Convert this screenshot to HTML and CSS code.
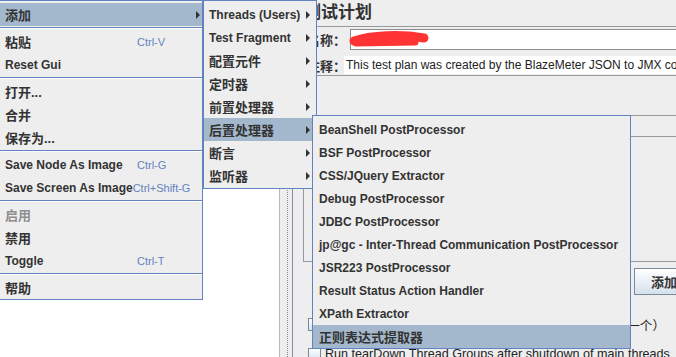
FILE: index.html
```html
<!DOCTYPE html>
<html lang="zh-CN">
<head>
    <meta charset="UTF-8">
    <title>测试计划</title>
    <link rel="stylesheet" href="styles.css">
</head>
<body>

<div class="app">
    <div class="tree"></div>
    <div class="splitter"><div class="grip"></div></div>

    <div class="main">
        <div class="title">测试计划</div>

        <div class="fields">
            <div class="field-row">
                <span class="label">名称：</span>
                <div class="input name-input">
                    <svg class="scribble" width="82" height="18" viewBox="0 0 82 18">
                        <path d="M5 10 C 22 4, 52 3, 75 7" stroke="#ff3333" stroke-width="9" stroke-linecap="round" fill="none"/>
                        <path d="M7 12 L 66 11" stroke="#ff3333" stroke-width="7" stroke-linecap="round" fill="none"/>
                    </svg>
                </div>
            </div>
            <div class="field-row note">
                <span class="label">注释：</span>
                <div class="input note-input">This test plan was created by the BlazeMeter JSON to JMX converter</div>
            </div>
        </div>

        <div class="vars"><div class="vars-head"></div></div>

        <div class="btn-row"><button class="btn">添加</button></div>

        <div class="check-row cn"><span class="box"></span><span>独立运行每个线程组（例如在一个组运行结束后启动下一个）</span></div>
        <div class="check-row last"><span class="box"></span><span>Run tearDown Thread Groups after shutdown of main threads</span></div>
    </div>

    <!-- popup menus -->
    <div class="menu m1">
        <div class="item on"><span class="zh">添加</span><span class="arrow"></span></div>
        <div class="sep"></div>
        <div class="item"><span class="txt zh">粘贴</span><span class="key">Ctrl-V</span></div>
        <div class="item"><span class="txt">Reset Gui</span></div>
        <div class="sep"></div>
        <div class="item"><span class="txt zh">打开...</span></div>
        <div class="item"><span class="txt zh">合并</span></div>
        <div class="item"><span class="txt zh">保存为...</span></div>
        <div class="sep"></div>
        <div class="item"><span class="txt">Save Node As Image</span><span class="key">Ctrl-G</span></div>
        <div class="item"><span class="txt tight">Save Screen As Image</span><span class="key">Ctrl+Shift-G</span></div>
        <div class="sep"></div>
        <div class="item off"><span class="txt zh">启用</span></div>
        <div class="item"><span class="txt zh">禁用</span></div>
        <div class="item"><span class="txt">Toggle</span><span class="key">Ctrl-T</span></div>
        <div class="sep"></div>
        <div class="item"><span class="txt zh">帮助</span></div>
    </div>

    <div class="menu m2">
        <div class="item"><span>Threads (Users)</span><span class="arrow"></span></div>
        <div class="item"><span>Test Fragment</span><span class="arrow"></span></div>
        <div class="item"><span class="zh">配置元件</span><span class="arrow"></span></div>
        <div class="item"><span class="zh">定时器</span><span class="arrow"></span></div>
        <div class="item"><span class="zh">前置处理器</span><span class="arrow"></span></div>
        <div class="item on"><span class="zh">后置处理器</span><span class="arrow"></span></div>
        <div class="item"><span class="zh">断言</span><span class="arrow"></span></div>
        <div class="item"><span class="zh">监听器</span><span class="arrow"></span></div>
    </div>

    <div class="menu m3">
        <div class="item">BeanShell PostProcessor</div>
        <div class="item">BSF PostProcessor</div>
        <div class="item">CSS/JQuery Extractor</div>
        <div class="item">Debug PostProcessor</div>
        <div class="item">JDBC PostProcessor</div>
        <div class="item">jp@gc - Inter-Thread Communication PostProcessor</div>
        <div class="item">JSR223 PostProcessor</div>
        <div class="item">Result Status Action Handler</div>
        <div class="item">XPath Extractor</div>
        <div class="item on"><span class="zh">正则表达式提取器</span></div>
    </div>
</div>

</body>
</html>
```

FILE: styles.css
```css
* {
    box-sizing: border-box;
}

html, body {
    margin: 0;
}

body {
    width: 676px;
    height: 357px;
    overflow: hidden;
    font-family: "Liberation Sans", "Noto Sans CJK SC", sans-serif;
    font-size: 12px;
    color: #333;
    background: #fff;
}

.app {
    position: relative;
    display: flex;
    height: 357px;
}

/* left tree + splitter */
.tree {
    width: 280px;
    flex: none;
    background: #fff;
    border-right: 1px solid #b8b8b8;
}

.splitter {
    width: 13px;
    flex: none;
    padding-left: 7px;
    background: #eee;
    border-right: 1px solid #7f8ea3;
}

.grip {
    height: 100%;
    border-left: 1px dotted #8c8c8c;
}

/* right panel */
.main {
    flex: 1;
    min-width: 0;
    overflow: hidden;
    white-space: nowrap;
    background: #eee;
}

.title {
    height: 27px;
    line-height: 25px;
    padding-left: 11px;
    font-size: 17px;
    font-weight: bold;
    border-bottom: 1px solid #999;
}

.fields {
    padding: 2px 0 1px 14px;
    border-bottom: 1px solid #999;
}

.field-row {
    display: flex;
    align-items: center;
    height: 21px;
}

.label {
    width: 43px;
    flex: none;
    font-size: 13px;
    font-weight: bold;
}

.note {
    margin-top: 6px;
    height: 18px;
}

.note .label {
    width: 37px;
}

.input {
    flex: 1;
    height: 100%;
    background: #fff;
}

.name-input {
    display: flex;
    align-items: center;
    border: 1px solid #8c8c8c;
    border-right: none;
}

.scribble {
    margin-left: -2px;
    margin-top: 1px;
}

.note-input {
    padding-left: 2px;
    line-height: 18px;
    color: #222;
    overflow: hidden;
}

.vars {
    margin: 39px 0 0 10px;
    height: 147px;
    border: 1px solid #999;
    border-right: none;
}

.vars-head {
    height: 21px;
    border-bottom: 1px solid #999;
}

.btn-row {
    margin-top: 6px;
    padding-left: 341px;
}

.btn {
    display: block;
    width: 80px;
    height: 27px;
    padding: 0 0 0 16px;
    text-align: left;
    font-family: "Noto Sans CJK SC", sans-serif;
    font-size: 13px;
    font-weight: bold;
    color: #333;
    border: 1px solid #7a8a99;
    background: linear-gradient(#fff, #d5e1ee);
}

.check-row {
    display: flex;
    align-items: center;
    gap: 4px;
    height: 13px;
    padding-left: 15px;
    color: #222;
}

.check-row.cn {
    margin-top: 23px;
    font-size: 12.6px;
}

.check-row.last {
    margin-top: 17px;
    font-size: 12.6px;
    align-items: flex-start;
    line-height: 12px;
}

.box {
    width: 13px;
    height: 13px;
    flex: none;
    border: 1px solid #7a8a99;
    background: linear-gradient(#fff, #d5e1ee);
}

/* popup menus */
.menu {
    position: absolute;
    top: 0;
    background: #eee;
    border: 1px solid #6382bf;
    padding-top: 2px;
}

.m1 {
    left: -1px;
    width: 204px;
}

.m2 {
    left: 203px;
    width: 114px;
    padding-bottom: 1px;
}

.m3 {
    left: 312px;
    top: 115px;
    width: 319px;
}

.item {
    display: flex;
    align-items: center;
    height: 23px;
    padding: 0 2px 0 5px;
    font-weight: bold;
    white-space: nowrap;
}

.m2 .item {
    padding-right: 6px;
}

.m3 .item {
    padding-left: 6px;
}

.item.on {
    background: #a3b8cc;
}

.item.off {
    color: #8e8e8e;
}

.zh {
    font-size: 13px;
}

.txt {
    min-width: 132px;
}

.txt.tight {
    min-width: 0;
}

.key {
    font-size: 11px;
    font-weight: normal;
    color: #6382bf;
}

.arrow {
    margin-left: auto;
    border-left: 4px solid #333;
    border-top: 4px solid transparent;
    border-bottom: 4px solid transparent;
}

.sep {
    margin: 1px 0;
    border-top: 1px solid #6382bf;
    border-bottom: 1px solid #fff;
}
```
